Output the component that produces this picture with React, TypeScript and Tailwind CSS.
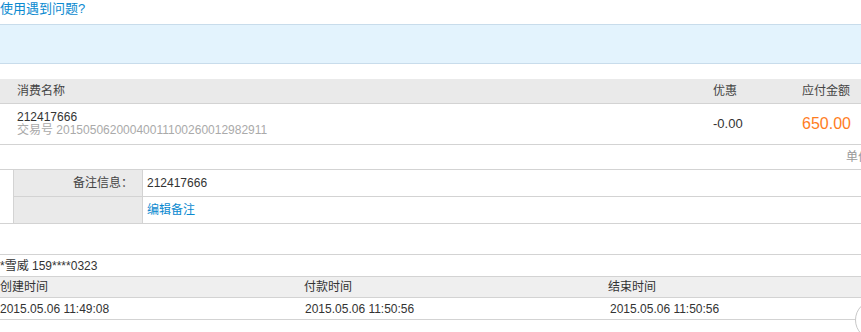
import React from "react";

const font = {
	fontFamily: '"Liberation Sans", "Noto Sans CJK SC", sans-serif',
};

const times = [
	{ label: "创建时间", value: "2015.05.06 11:49:08" },
	{ label: "付款时间", value: "2015.05.06 11:50:56" },
	{ label: "结束时间", value: "2015.05.06 11:50:56" },
];

export default function App() {
	return (
		<div
			className="relative w-[861px] h-[332px] overflow-hidden bg-white text-[12px] text-[#333]"
			style={font}
		>
			<div className="h-6 text-[13px] leading-[17px] text-[#0b8ad0]">
				<a href="#">使用遇到问题?</a>
			</div>

			<div className="h-10 border-y border-[#c8dceb] bg-[#e3f3fd]" />

			{/* order table */}
			<div className="mt-[15px]">
				<div className="flex h-[25px] items-center border-b border-[#d3d3d3] bg-[#eaeaea] text-[#444]">
					<div className="flex-1 pl-[17px]">消费名称</div>
					<div className="w-[90px] pl-[1px]">优惠</div>
					<div className="w-[59px]">应付金额</div>
				</div>
				<div className="flex h-[41px] items-center border-b border-[#d3d3d3]">
					<div className="flex-1 pl-[17px] leading-[13px]">
						<div>212417666</div>
						<div className="text-[#aaa]">交易号 20150506200040011100260012982911</div>
					</div>
					<div className="w-[90px] pl-[1px] text-[13px]">-0.00</div>
					<div className="w-[59px] text-[16px] text-[#ff7d1e]">650.00</div>
				</div>
				<div className="flex h-[24px] items-center whitespace-nowrap pl-[846px] text-[#999]">
					单价：650.00
				</div>
			</div>

			{/* remark */}
			<div className="flex border-y border-[#d3d3d3]">
				<div className="w-[14px] border-r border-[#d3d3d3]" />
				<div className="flex-1">
					<div className="flex h-[27px] border-b border-[#d3d3d3]">
						<div className="flex w-[129px] items-center justify-end border-r border-[#d3d3d3] bg-[#eaeaea] pr-[9px] text-[#444]">
							备注信息：
						</div>
						<div className="flex items-center pl-[4px]">212417666</div>
					</div>
					<div className="flex h-[26px]">
						<div className="w-[129px] border-r border-[#d3d3d3] bg-[#eaeaea]" />
						<div className="flex items-center pl-[4px] text-[#0b8ad0]">
							<a href="#">编辑备注</a>
						</div>
					</div>
				</div>
			</div>

			{/* buyer and times */}
			<div className="mt-[30px] border-t border-[#d3d3d3]">
				<div className="flex h-[22px] items-center border-b border-[#d3d3d3]">
					*雪威 159****0323
				</div>
				<div className="flex h-[21px] items-center border-b border-[#d3d3d3] bg-[#efefef]">
					{times.map((t) => (
						<div key={t.label} className="-ml-[1px] w-[305px] shrink-0 pl-[1px]">
							{t.label}
						</div>
					))}
				</div>
				<div className="flex h-[22px] items-center border-b border-[#d3d3d3]">
					{times.map((t) => (
						<div key={t.label} className="w-[305px] shrink-0">
							{t.value}
						</div>
					))}
				</div>
			</div>

			<div className="absolute left-[855px] top-[300px] h-10 w-10 rounded-full border border-[#c8c8c8] bg-white" />
		</div>
	);
}
